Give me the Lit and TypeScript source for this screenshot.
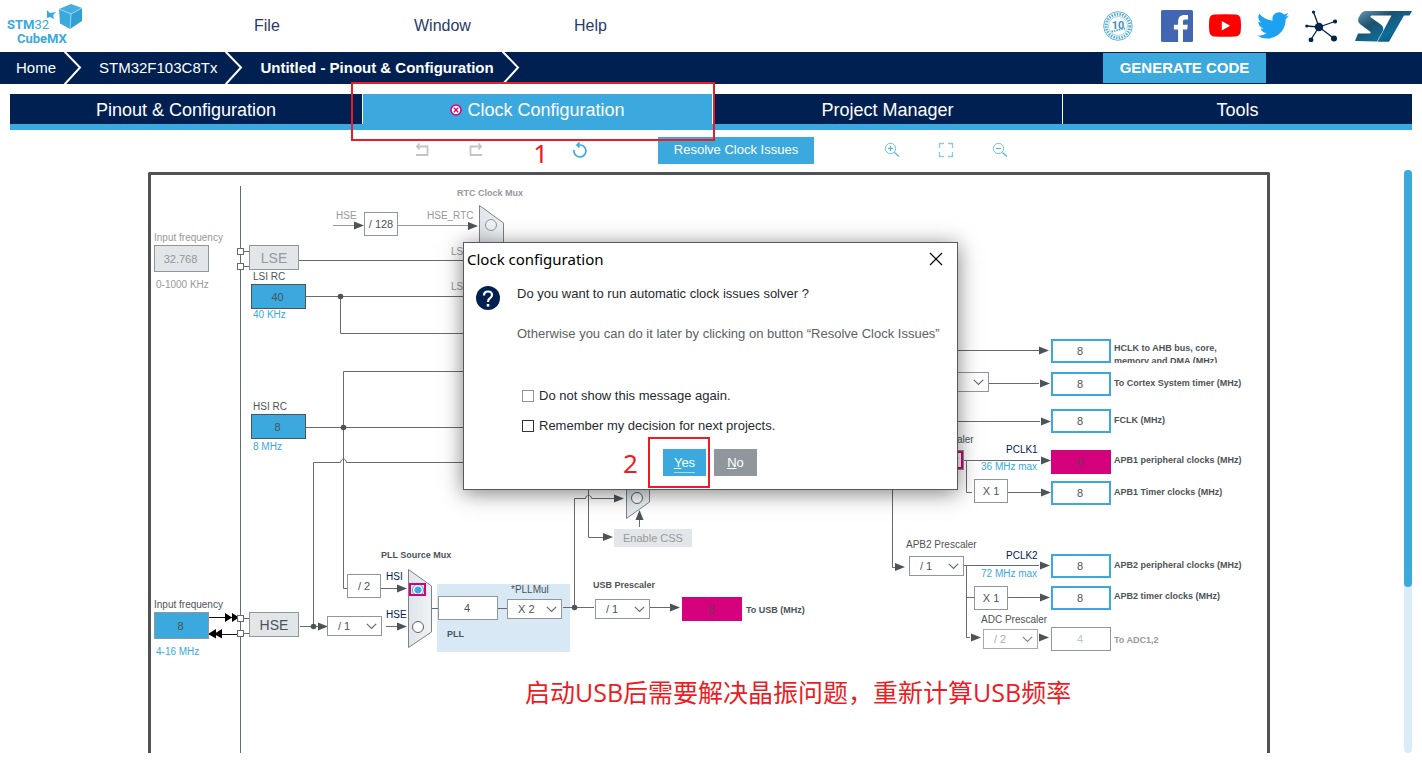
import { LitElement, html, css, svg } from "lit";
import { customElement } from "lit/decorators.js";

/* Diagram coordinates are expressed in sheet units; the sheet starts here. */
const SHEET = { x: 148, y: 172, w: 1122, h: 581 };
const at = (x: number, y: number) => `left:${x - SHEET.x}px;top:${y - SHEET.y}px`;
const box = (x: number, y: number, w: number, h: number) => `${at(x, y)};width:${w}px;height:${h}px`;

type Label = [number, number, string, string];
const LABELS: Label[] = [
  [154, 238, "Input frequency", "dim"],
  [156, 285, "0-1000 KHz", "dim"],
  [253, 277, "LSI RC", ""],
  [253, 315, "40 KHz", "blue"],
  [253, 407, "HSI RC", ""],
  [253, 447, "8 MHz", "blue"],
  [154, 605, "Input frequency", ""],
  [156, 652, "4-16 MHz", "blue"],
  [336, 216, "HSE", "dim"],
  [427, 216, "HSE_RTC", "dim"],
  [457, 193, "RTC Clock Mux", "dim bold"],
  [451, 252, "LSE", "dim"],
  [451, 287, "LSI", "dim"],
  [386, 577, "HSI", "navy"],
  [386, 615, "HSE", "navy"],
  [381, 555, "PLL Source Mux", "bold"],
  [511, 590, "*PLLMul", ""],
  [447, 634, "PLL", "bold"],
  [591, 487, "PLLCLK", "navy"],
  [593, 585, "USB Prescaler", "bold"],
  [746, 610, "To USB (MHz)", "bold"],
  [903, 440, "APB1 Prescaler", ""],
  [906, 545, "APB2 Prescaler", ""],
  [981, 620, "ADC Prescaler", ""],
  [1006, 450, "PCLK1", "navy"],
  [1006, 556, "PCLK2", "navy"],
  [981, 467, "36 MHz max", "blue"],
  [981, 574, "72 MHz max", "blue"],
  [1114, 383, "To Cortex System timer (MHz)", "bold"],
  [1114, 420, "FCLK (MHz)", "bold"],
  [1114, 460, "APB1 peripheral clocks (MHz)", "bold"],
  [1114, 492, "APB1 Timer clocks (MHz)", "bold"],
  [1114, 565, "APB2 peripheral clocks (MHz)", "bold"],
  [1114, 596, "APB2 timer clocks (MHz)", "bold"],
  [1114, 640, "To ADC1,2", "dim bold"],
];

type Field = [number, number, number, number, string, string, string];
const FIELDS: Field[] = [
  [154, 245, 55, 27, "32.768", "off", "LSE input frequency"],
  [251, 284, 55, 25, "40", "source", "LSI RC"],
  [251, 414, 55, 25, "8", "source", "HSI RC"],
  [154, 612, 55, 27, "8", "source edge", "HSE input frequency"],
  [438, 596, 60, 24, "4", "plain", "PLL input"],
  [682, 597, 60, 24, "8", "error", "To USB (MHz)"],
  [1051, 339, 60, 24, "8", "out", "HCLK (MHz)"],
  [1051, 372, 60, 24, "8", "out", "To Cortex System timer (MHz)"],
  [1051, 409, 60, 24, "8", "out", "FCLK (MHz)"],
  [1051, 450, 60, 24, "8", "error", "APB1 peripheral clocks (MHz)"],
  [1051, 481, 60, 24, "8", "out", "APB1 Timer clocks (MHz)"],
  [1051, 554, 60, 24, "8", "out", "APB2 peripheral clocks (MHz)"],
  [1051, 586, 60, 24, "8", "out", "APB2 timer clocks (MHz)"],
  [1051, 627, 60, 24, "4", "plain faded", "To ADC1,2"],
];

const FACTORS: [number, number, string][] = [
  [364, 212, "/ 128"],
  [347, 574, "/ 2"],
  [974, 479, "X 1"],
  [974, 586, "X 1"],
];

const SELECTS: [number, number, string, string, string][] = [
  [327, 616, "/ 1", "HSE prescaler", ""],
  [507, 599, "X 2", "PLLMul", ""],
  [595, 599, "/ 1", "USB Prescaler", ""],
  [934, 372, "/ 1", "Cortex prescaler", ""],
  [909, 450, "/ 1", "APB1 Prescaler", "wrong"],
  [909, 556, "/ 1", "APB2 Prescaler", ""],
  [983, 629, "/ 2", "ADC Prescaler", "faint"],
];

const WIRES = [
  "M240.5 186V753",
  "M243 251.5H249M243 266.5H249M299 260.5H470",
  "M306 296.5H470M340.5 296.5V333.5H470",
  "M470 371.5H343.5V588.5H347M306 427.5H470",
  "M313.5 626.5V462.5H340.5C341 458 346 458 346.5 462.5H470",
  "M243 618.5H249M243 633.5H249M300 626.5H320M386 626.5H397M381 588.5H397",
  "M432 608.5H438M498 608.5H507M563 607.5H594",
  "M574.5 607.5V498.5H585.5C586 494 591 494 591.5 498.5H614",
  "M588.5 480V537.5H603M639.5 527V519M650 607.5H670",
  "M950 350.5H1039M989 383.5H1039M950 421.5H1040M964 460.5H1040",
  "M966.5 460.5V492.5H972M1008 492.5H1041",
  "M892.5 480V567.5H896M964 565.5H1039M966.5 565.5V637.5H970M966.5 597.5H974M1008 597.5H1040",
];

const ARROWS: [number, number][] = [
  [364, 225.5], [478, 226], [328, 626.5], [407, 626.5], [407, 588.5],
  [624, 498.5], [613, 537], [680, 607.5], [1049, 350.5], [1050, 383.5],
  [1051, 421.5], [1051, 460.5], [1051, 492.5], [905, 567], [1050, 565.5],
  [1050, 597.5], [981, 637.5], [1049, 637.5],
];

const DOTS: [number, number][] = [
  [340.5, 296.5], [343.5, 427.5], [313.5, 626.5], [574.5, 607.5],
];

const PINS: [number, number][] = [[237.5, 248.5], [237.5, 263.5], [237.5, 615.5], [237.5, 630.5]];

const chevron = html`<svg class="chev" width="18" height="32" viewBox="0 0 18 32" aria-hidden="true">
  <path d="M0.5 -0.5L16 15.5L0.5 32.5" fill="none" stroke="#fff" stroke-width="2" />
</svg>`;

@customElement("top-header")
class TopHeader extends LitElement {
  static styles = css`
    :host { display: block; }
    .bar { display: flex; align-items: center; height: 52px; padding: 0 9px 0 6px; box-sizing: border-box; }
    .logo { flex: none; width: 248px; height: 52px; }
    .menu { display: grid; grid-template-columns: repeat(3, 160px); flex: 1; }
    .menu button {
      justify-self: start; border: 0; padding: 0; background: none; color: #2c3a66;
      font: 16px/20px "Liberation Sans", Arial, sans-serif;
    }
    .social { display: flex; align-items: center; gap: 16px; }
    .social a { display: block; height: 32px; }
    .social a:first-child { margin-right: 12px; }
    .social svg { display: block; }
    .name { font: 13px Roboto, sans-serif; fill: #3ba9dd; }
    .name .strong, .name.strong { font-weight: 700; }
    .ten { font: 700 11px Roboto, sans-serif; fill: #3a8fc0; }
  `;
  render() {
    return html`<header class="bar">
      <svg class="logo" viewBox="6 0 248 52" role="img" aria-label="STM32 CubeMX">
        <text x="7" y="29" class="name"><tspan class="strong">STM</tspan>32</text>
        <text x="17" y="43" class="name strong">CubeMX</text>
        <path d="M47 10l3 3 6-1-3 3 1 4-4-2-3 1z" fill="#3ba9dd" />
        <path d="M71 4L82 8L71 14L59 9z" fill="#45addf" />
        <path d="M59 9L71 14L70 29L60 23.500z" fill="#3ba9dd" />
        <path d="M82 8L71 14L70 29L82 21z" fill="#319fd4" />
        <path d="M59 9L71 14L82 8M71 14L70 29" fill="none" stroke="#a8dbf2" stroke-width="0.8" />
      </svg>
      <nav class="menu"><button>File</button><button>Window</button><button>Help</button></nav>
      <div class="social">
        <a href="#" aria-label="10 years"><svg width="30" height="32" viewBox="0 0 30 32">
          <circle cx="15" cy="16" r="14.300" fill="none" stroke="#64b4dc" />
          <circle cx="15" cy="16" r="11.800" fill="none" stroke="#5aaeda" stroke-width="3" stroke-dasharray="1.500 1.200" />
          <circle cx="15" cy="16" r="9.500" fill="#fff" stroke="#7cc2e4" stroke-width="0.700" />
          <text x="15" y="18.500" text-anchor="middle" class="ten">10</text>
          <path d="M8.500 21.500L22 18.500" stroke="#5aaeda" stroke-width="2" stroke-dasharray="1.500 1" />
        </svg></a>
        <a href="#" aria-label="Facebook"><svg width="32" height="32" viewBox="0 0 32 32">
          <rect width="32" height="32" rx="1.500" fill="#4267b2" />
          <path d="M22 32V19.600h4.200l.6-4.800H22v-3.100c0-1.400.4-2.300 2.400-2.300H27V5.100C26.500 5 25 4.900 23.300 4.900c-3.700 0-6.200 2.200-6.200 6.400v3.500h-4.200v4.800h4.200V32z" fill="#fff" />
        </svg></a>
        <a href="#" aria-label="YouTube"><svg width="32" height="32" viewBox="0 0 32 32">
          <path d="M5 4.600Q16 3.800 27 4.600Q31 5 31.600 9Q32.400 15.500 31.600 22Q31 26 27 26.400Q16 27.200 5 26.400Q1 26 .4 22Q-.4 15.500 .4 9Q1 5 5 4.600z" fill="#f00" />
          <path d="M12.800 11v9.400l8.400-4.700z" fill="#fff" />
        </svg></a>
        <a href="#" aria-label="Twitter"><svg width="32" height="32" viewBox="0 0 24 24">
          <path d="M23.600 4.900c-.9.400-1.800.7-2.800.8 1-.6 1.800-1.600 2.100-2.700-.9.600-2 1-3.100 1.200a4.900 4.900 0 0 0-8.400 4.500C7.300 8.500 3.700 6.500 1.300 3.600a4.900 4.900 0 0 0 1.500 6.600c-.8 0-1.600-.2-2.200-.6v.1c0 2.400 1.700 4.400 3.900 4.800-.7.200-1.500.2-2.200.1.600 2 2.400 3.400 4.600 3.400A9.900 9.900 0 0 1-.4 20a14 14 0 0 0 7.500 2.200c9.100 0 14-7.500 14-14v-.6c1-.8 1.800-1.600 2.500-2.700z" fill="#1da1f2" transform="translate(.4 -.8)" />
        </svg></a>
        <a href="#" aria-label="Community"><svg width="32" height="32" viewBox="0 0 32 32">
          <path d="M14 17L8.500 2M14 17L1.500 16M14 17L30 11.500M14 17L29 28.500M14 17L6 29.500" stroke="#03234b" stroke-width="1.300" fill="none" />
          <circle cx="14" cy="17" r="4.200" fill="#03234b" /><circle cx="8.500" cy="2" r="1.600" fill="#03234b" />
          <circle cx="1.800" cy="16" r="1.600" fill="#03234b" /><circle cx="30" cy="11.500" r="2.100" fill="#03234b" />
          <circle cx="29" cy="28.500" r="3" fill="#03234b" /><circle cx="6" cy="29.800" r="2.400" fill="#03234b" />
        </svg></a>
        <a href="#" aria-label="STMicroelectronics"><svg width="60" height="32" viewBox="0 0 60 32">
          <defs><linearGradient id="g" x1="0" y1="0" x2="1" y2="1">
            <stop offset="0" stop-color="#6d9cb4" /><stop offset=".35" stop-color="#1d5070" /><stop offset=".65" stop-color="#0d6c98" /><stop offset="1" stop-color="#0b4a6c" />
          </linearGradient></defs>
          <path d="M13 1H60L57.500 5.500H52L37 31.700H25.500L39.500 5.500H20Q17.500 5.800 19 7.500L29.500 15Q32.500 18 30.500 21.500L25 31.500L3 31L6 23.500H17.500Q19.500 23 18 21.500L8.500 14.500Q5 11.500 6.500 8Q9 2 13 1z" fill="url(#g)" transform="translate(-1 0)" />
        </svg></a>
      </div>
    </header>`;
  }
}

@customElement("crumb-bar")
class CrumbBar extends LitElement {
  static styles = css`
    :host { display: block; }
    .bar { display: flex; align-items: center; height: 32px; background: #002052; padding: 0 156px 0 16px; }
    .bar a { color: #fff; text-decoration: none; font: 15px/20px "Liberation Sans", Arial, sans-serif; }
    .bar a.here { font-weight: 700; }
    .chev { flex: none; margin: 0 17px 0 8px; }
    .gen {
      margin-left: auto; width: 163px; height: 30px; border: 0; padding: 0; background: #3ba9dd; color: #fff;
      font: 700 15px/20px "Liberation Sans", Arial, sans-serif;
    }
  `;
  render() {
    return html`<nav class="bar">
      <a href="#">Home</a>${chevron}<a href="#">STM32F103C8Tx</a>${chevron}
      <a href="#" class="here">Untitled - Pinout &amp; Configuration</a>${chevron}
      <button class="gen">GENERATE CODE</button>
    </nav>`;
  }
}

@customElement("clock-diagram")
class ClockDiagram extends LitElement {
  static styles = css`
    :host { display: block; height: 100%; overflow: hidden; }
    .sheet {
      position: relative; height: 100%; box-sizing: border-box; background: #fff; color: #4d5357;
      font: 10px/12px "Liberation Sans", Arial, sans-serif;
    }
    .frame { position: absolute; inset: 0; border: 3px solid #505356; border-bottom: 0; border-radius: 2px 2px 0 0; }
    .wires { position: absolute; left: 0; top: 0; }
    .label { position: absolute; white-space: nowrap; transform: translateY(-50%); }
    .dim { color: #97999b; }
    .blue { color: #3ba9dd; }
    .navy { color: #002052; }
    .bold { font-weight: 700; font-size: 9px; }
    .wrapped { position: absolute; overflow: hidden; font-weight: 700; font-size: 9px; line-height: 13px; }
    .field, .factor, .pick, .osc {
      position: absolute; box-sizing: border-box; margin: 0; padding: 0; border-radius: 0; outline: 0;
      font: 11px/14px "Liberation Sans", Arial, sans-serif; color: #4d5357; text-align: center;
    }
    .field { border: 1px solid #8f979d; background: #fff; padding-right: 2px; }
    .off { background: #e3e6e9; color: #8f979d; }
    .source { background: #3ba9dd; border-color: #4d5357; }
    .edge { border-color: #8f979d; }
    .plain { border-color: #8f979d; }
    .faded { color: #b4c8dc; }
    .out { border: 2px solid #3ba9dd; }
    .error { background: #d5007b; border-color: #d5007b; color: #6b3a5c; }
    .factor { display: grid; place-items: center; width: 34px; height: 24px; border: 1px solid #8f979d; background: #fff; white-space: nowrap; }
    .pick {
      appearance: none; width: 55px; height: 20px; padding-left: 10px; border: 1px solid #8f979d; text-align: left;
      background: #fff url("data:image/svg+xml,%3Csvg xmlns='http://www.w3.org/2000/svg' width='11' height='7'%3E%3Cpath d='M.8.8L5.500 5.500L10.200.8' fill='none' stroke='%23666c70' stroke-width='1.200'/%3E%3C/svg%3E") no-repeat right 4px center;
    }
    .faint { color: #97999b; opacity: 0.8; }
    .wrong { box-shadow: inset 0 0 0 2px #d5007b; }
    .osc { border: 1px solid #8f979d; background: #e3e6e9; font-size: 14px; }
    .osc.idle { color: #97999b; }
    .css { border: 0; font-size: 11px; }
    .radio {
      position: absolute; appearance: none; width: 12px; height: 12px; margin: 0; box-sizing: border-box;
      border: 1px solid #5a6063; border-radius: 50%; background: #fff;
    }
    .radio.quiet { border-color: #8f979d; background: #eef1f3; }
    .radio:checked { border-color: #3ba9dd; background: radial-gradient(#3ba9dd 0 3px, #fff 4px); }
    .ring { position: absolute; box-sizing: border-box; border: 2px solid #d5007b; }
  `;
  render() {
    return html`<div class="sheet">
      <div class="frame"></div>
      <svg class="wires" width=${SHEET.w} height=${SHEET.h} viewBox="${SHEET.x} ${SHEET.y} ${SHEET.w} ${SHEET.h}" aria-hidden="true">
        <defs><linearGradient id="m"><stop offset="0" stop-color="#dfe5e9" /><stop offset="1" stop-color="#eff2f4" /></linearGradient></defs>
        <rect x="437" y="584" width="133" height="68" fill="#d9e8f5" />
        <path d="M333 225.500H354M398 225.500H468" stroke="#999" fill="none" />
        ${WIRES.map((d) => svg`<path d=${d} fill="none" stroke="#666b6e" />`)}
        <path d="M209 617.500H237M237 634.500H209" stroke="#111" />
        ${[232, 239].map((x) => svg`<path d="M${x - 7} 613L${x} 617.500L${x - 7} 622z" />`)}
        ${[208, 214].map((x) => svg`<path d="M${x + 8} 629L${x} 634L${x + 8} 638.500z" />`)}
        ${ARROWS.map(([x, y]) => svg`<path d="M${x - 10} ${y - 4}L${x} ${y}L${x - 10} ${y + 4}z" fill="#4d5357" />`)}
        ${DOTS.map(([x, y]) => svg`<circle cx=${x} cy=${y} r="2.800" fill="#4d5357" />`)}
        ${PINS.map(([x, y]) => svg`<rect x=${x} y=${y} width="6" height="6" fill="#fff" stroke="#666b6e" />`)}
        <g fill="url(#m)" stroke="#7b8185">
          <path d="M479.500 205.500L503.500 223V260H479.500z" />
          <path d="M408.500 569.500L431.500 586V632L408.500 647.500z" />
          <path d="M626.500 460V518.500L649.500 502V460z" />
        </g>
        <path d="M635.500 520L639.500 510L643.500 520z" fill="#4d5357" />
      </svg>
      ${LABELS.map(([x, y, t, c]) => html`<span class="label ${c}" style=${at(x, y)}>${t}</span>`)}
      <span class="wrapped" style=${box(1114, 342, 120, 21)}>HCLK to AHB bus, core,<br />memory and DMA (MHz)</span>
      ${FIELDS.map(([x, y, w, h, v, c, n]) => html`<input class="field ${c}" style=${box(x, y, w, h)} .value=${v} aria-label=${n} />`)}
      ${FACTORS.map(([x, y, t]) => html`<div class="factor" style=${at(x, y)}>${t}</div>`)}
      ${SELECTS.map(([x, y, t, n, c]) => html`<select class="pick ${c}" style=${at(x, y)} aria-label=${n}><option>${t}</option></select>`)}
      <button class="osc idle" style=${box(249, 245, 50, 25)}>LSE</button>
      <button class="osc" style=${box(249, 612, 50, 25)}>HSE</button>
      <button class="osc css idle" style=${box(614, 529, 78, 18)}>Enable CSS</button>
      <input class="radio quiet" type="radio" name="rtc" aria-label="RTC clock HSE" style=${at(485, 219)} />
      <input class="radio" type="radio" name="sys" aria-label="System clock PLL" style=${at(631, 492)} />
      <input class="radio" type="radio" name="pll" aria-label="PLL source HSE" style=${at(412, 621)} />
      <input class="radio" type="radio" name="pll" aria-label="PLL source HSI" style=${at(412, 584)} checked />
      <span class="ring" style=${box(409, 583, 17, 13)}></span>
    </div>`;
  }
}

@customElement("solver-dialog")
class SolverDialog extends LitElement {
  static styles = css`
    :host { display: block; }
    .dialog {
      width: 495px; height: 248px; box-sizing: border-box; border: 1px solid #55595c; background: #fff;
      box-shadow: 0 3px 20px rgba(0, 0, 0, 0.5); font: 13px/20px "Liberation Sans", Arial, sans-serif; color: #262a2e;
    }
    .title { display: flex; align-items: center; justify-content: space-between; height: 31px; padding: 0 14px 0 3px; }
    .title h2 { margin: 0; font: 15px/20px "Noto Sans", "Open Sans", sans-serif; color: #000; }
    .close { display: grid; border: 0; padding: 0; background: none; }
    .body { display: grid; grid-template-columns: 24px 1fr; column-gap: 17px; padding: 10px 0 0 12px; }
    .mark { margin-top: 2px; }
    .text p { margin: 0 0 20px; white-space: nowrap; }
    .text .later { color: #5c6165; margin-bottom: 42px; }
    .tick { display: flex; align-items: center; gap: 5px; margin: 0 0 10px 5px; }
    .tick input { appearance: none; margin: 0; width: 12px; height: 12px; border: 1px solid #303438; background: #fff; }
    .tick .soft { border-color: #8f979d; }
    .actions { display: flex; gap: 8px; margin: 3px 0 0 199px; position: relative; }
    .actions button { width: 43px; height: 27px; border: 0; padding: 0; color: #fff; font: 13px/18px "Liberation Sans", Arial, sans-serif; }
    .yes { background: #3ba9dd; }
    .yes span { display: inline-block; box-shadow: 0 1px #a9dcf3; }
    .actions .no { background: #8f979d; }
    .hint { position: absolute; left: -15px; top: -12px; width: 62px; height: 51px; box-sizing: border-box; border: 2px solid #ed1c24; pointer-events: none; }
    .step { position: absolute; left: -40px; top: -1px; font: 26px/30px "Noto Sans", sans-serif; color: #ed1c24; }
  `;
  render() {
    return html`<section class="dialog" role="dialog" aria-labelledby="t">
      <div class="title"><h2 id="t">Clock configuration</h2>
        <button class="close" aria-label="Close"><svg width="14" height="14" viewBox="0 0 14 14"><path d="M1 1L13 13M13 1L1 13" stroke="#000" stroke-width="1.200" /></svg></button>
      </div>
      <div class="body">
        <svg class="mark" width="24" height="24" viewBox="0 0 24 24" aria-hidden="true">
          <circle cx="12" cy="12" r="12" fill="#002052" />
          <path d="M8 9.500Q8 5.500 12 5.500Q16 5.500 16 9Q16 10.800 14 12.200Q12 13.500 12 16" fill="none" stroke="#fff" stroke-width="2.200" />
          <rect x="10.700" y="18" width="2.600" height="2.600" fill="#fff" />
        </svg>
        <div class="text">
          <p>Do you want to run automatic clock issues solver ?</p>
          <p class="later">Otherwise you can do it later by clicking on button “Resolve Clock Issues”</p>
          <label class="tick"><input type="checkbox" class="soft" />Do not show this message again.</label>
          <label class="tick"><input type="checkbox" />Remember my decision for next projects.</label>
        </div>
      </div>
      <div class="actions">
        <button class="yes"><span><u>Y</u>es</span></button><button class="no"><u>N</u>o</button>
        <span class="hint"></span><span class="step">2</span>
      </div>
    </section>`;
  }
}

@customElement("app-root")
class AppRoot extends LitElement {
  static styles = css`
    :host { display: block; font-family: "Liberation Sans", Arial, sans-serif; }
    .page { position: relative; display: flex; flex-direction: column; height: 100vh; box-sizing: border-box; padding-bottom: 10px; background: #fff; overflow: hidden; }
    .tabs { display: flex; margin: 10px 10px 0; border-bottom: 6px solid #3ba9dd; }
    .tab {
      position: relative; flex: 1 1 0; height: 30px; border: 0; border-left: 1px solid #fff; padding: 2px 0 0;
      background: #002052; color: #fff; font: 18px/24px "Liberation Sans", Arial, sans-serif;
    }
    .tab:first-child { flex-basis: 3px; border-left: 0; }
    .active { background: #3ba9dd; }
    .active svg { margin-right: 5px; }
    .hint { position: absolute; left: -12px; right: -3px; top: -12px; height: 59px; box-sizing: border-box; border: 2px solid #ed1c24; pointer-events: none; z-index: 1; }
    .tools { position: relative; display: flex; align-items: center; justify-content: center; gap: 70px; height: 40px; }
    .group { display: flex; gap: 38px; }
    .history { margin-right: 18px; }
    .tool { display: block; width: 16px; height: 16px; padding: 0; border: 0; background: none; }
    .tool svg { display: block; }
    .resolve { width: 156px; height: 27px; border: 0; padding: 0; background: #3ba9dd; color: #fff; font: 13px/20px "Liberation Sans", Arial, sans-serif; }
    .step { position: absolute; right: 100%; margin-right: 24px; top: -7px; font: 26px/36px "Noto Sans", sans-serif; color: #ed1c24; }
    .redo { position: relative; }
    .work { display: flex; flex: 1; min-height: 0; padding: 0 10px; }
    .view { position: relative; flex: 1; min-width: 0; display: flex; justify-content: center; padding: 2px 0 0 4px; }
    .view clock-diagram { flex: 0 0 1122px; box-sizing: border-box; }
    .scroll { width: 8px; background: #d9ecf8; border-radius: 4px; }
    .thumb { height: 417px; background: #3ba9dd; border-radius: 4px; }
    .note { position: absolute; left: 515px; top: 502px; margin: 0; white-space: nowrap; font: 25px/40px "Open Sans", "Noto Sans CJK SC", sans-serif; color: #ed1c24; }
    .overlay { position: absolute; inset: 0; display: grid; place-content: center; padding: 0 1px 31px 0; pointer-events: none; }
    .overlay solver-dialog { pointer-events: auto; }
  `;
  render() {
    return html`<main class="page">
      <top-header></top-header>
      <crumb-bar></crumb-bar>
      <nav class="tabs">
        <button class="tab">Pinout &amp; Configuration</button>
        <button class="tab active">
          <svg width="12" height="12" viewBox="0 0 12 12" aria-hidden="true"><circle cx="6" cy="6" r="5" fill="#fff" stroke="#d5007b" stroke-width="1.500" /><path d="M3.800 3.800L8.200 8.200M8.200 3.800L3.800 8.200" stroke="#d5007b" stroke-width="1.300" /></svg>Clock Configuration
          <span class="hint"></span>
        </button>
        <button class="tab">Project Manager</button>
        <button class="tab">Tools</button>
      </nav>
      <div class="tools">
        <div class="group history">
          <button class="tool" aria-label="Undo"><svg width="16" height="16" viewBox="0 0 16 16"><path d="M5.500 1.500L3 4.500L5.500 7.500M2.500 4.500H13.500V13H2" fill="none" stroke="#c4c4c4" stroke-width="1.800" /></svg></button>
          <button class="tool" aria-label="Redo"><svg width="16" height="16" viewBox="0 0 16 16"><path d="M10.500 1.500L13 4.500L10.500 7.500M13.500 4.500H2.500V13H14" fill="none" stroke="#c4c4c4" stroke-width="1.800" /></svg></button>
        </div>
        <div class="redo">
          <button class="tool" aria-label="Reset"><svg width="16" height="16" viewBox="0 0 16 16"><path d="M5.500 3H8.500A6 6 0 1 1 2 8M7.500 .5L5 3L7.500 5.500" fill="none" stroke="#3ba9dd" stroke-width="1.700" /></svg></button>
          <span class="step">1</span>
        </div>
        <button class="resolve">Resolve Clock Issues</button>
        <div class="group">
          <button class="tool" aria-label="Zoom in"><svg width="16" height="16" viewBox="0 0 16 16"><path d="M10.500 10.500L15 14.500M4 6.500H9M6.500 4V9" stroke="#55b2e0" stroke-width="1.200" /><circle cx="6.500" cy="6.500" r="5.200" fill="none" stroke="#6fbfe5" /></svg></button>
          <button class="tool" aria-label="Fit"><svg width="16" height="16" viewBox="0 0 16 16"><path d="M1.500 6V1.500H6M10 1.500H14.500V6M14.500 10V14.500H10M6 14.500H1.500V10" fill="none" stroke="#86c9ea" stroke-width="1.300" /></svg></button>
          <button class="tool" aria-label="Zoom out"><svg width="16" height="16" viewBox="0 0 16 16"><path d="M10.500 10.500L15 14.500M4 6.500H9" stroke="#55b2e0" stroke-width="1.200" /><circle cx="6.500" cy="6.500" r="5.200" fill="none" stroke="#6fbfe5" /></svg></button>
        </div>
      </div>
      <div class="work">
        <div class="view">
          <clock-diagram></clock-diagram>
          <p class="note">启动USB后需要解决晶振问题，重新计算USB频率</p>
        </div>
        <div class="scroll"><div class="thumb"></div></div>
      </div>
      <div class="overlay"><solver-dialog></solver-dialog></div>
    </main>`;
  }
}
